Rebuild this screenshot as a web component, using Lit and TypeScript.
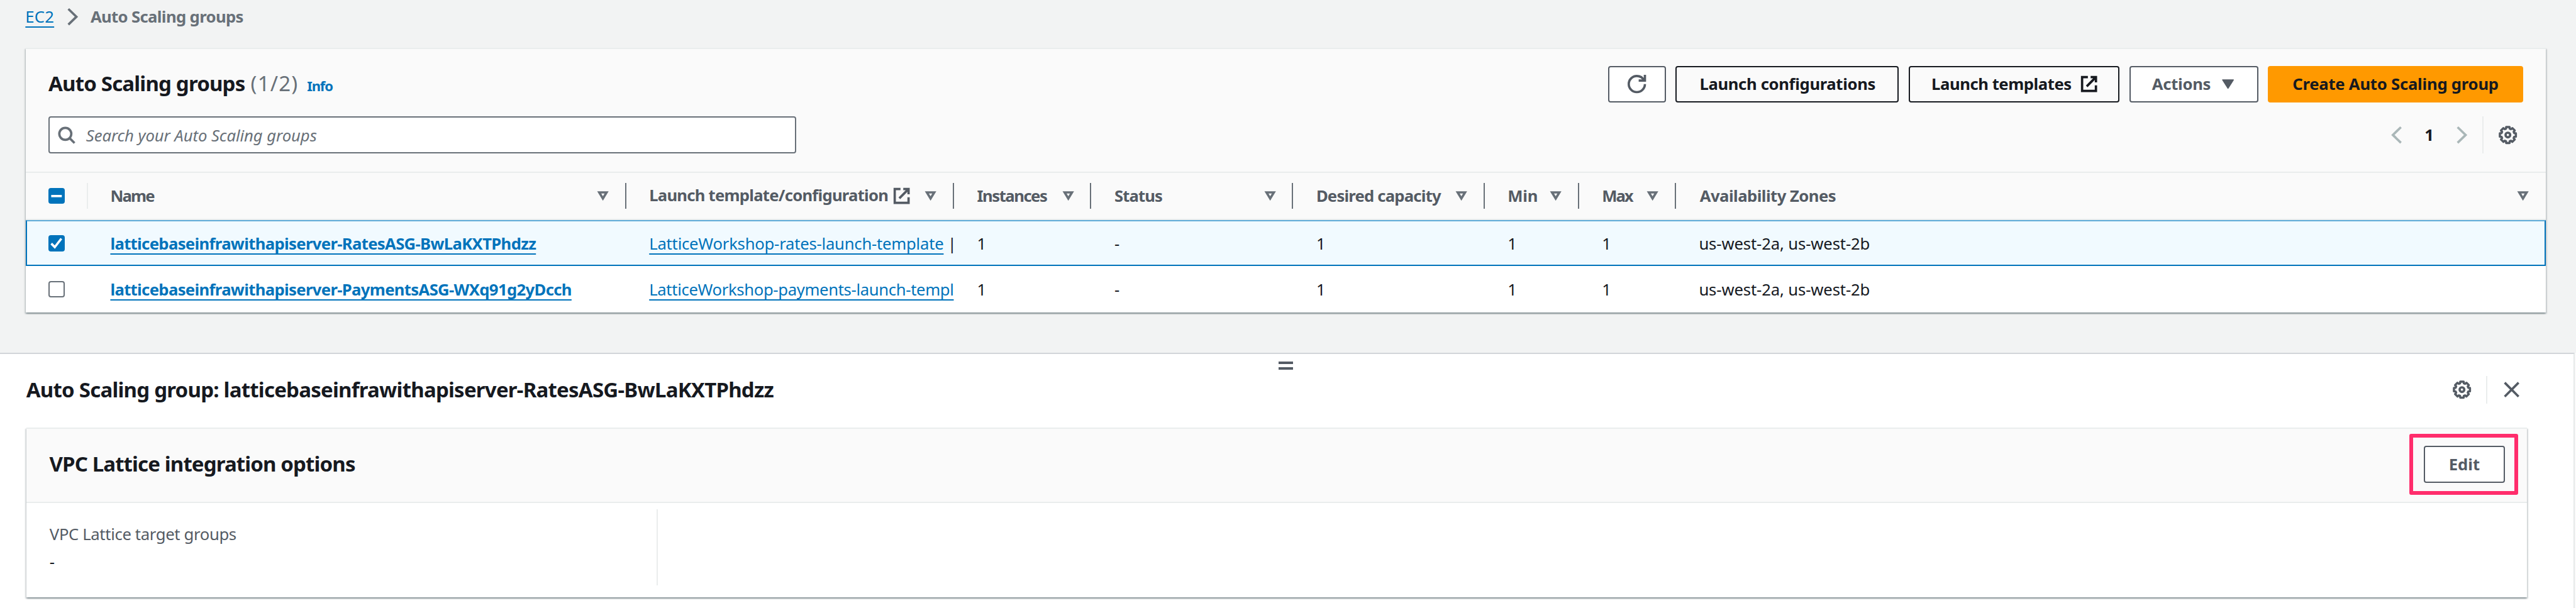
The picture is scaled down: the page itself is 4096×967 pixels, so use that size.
import { LitElement, html, css, svg, unsafeCSS } from "lit";
import { customElement, property } from "lit/decorators.js";
import { classMap } from "lit/directives/class-map.js";

// Design units (half of a CSS pixel in the console's own grid) to page pixels.
const SCALE = 0.91715;
const u = (n: number) => unsafeCSS((n * SCALE).toFixed(2) + "px");

const gearPath = (() => {
  const pts: string[] = [];
  for (let i = 0; i < 8; i++) {
    const a = i * 45;
    for (const [r, off] of [[5.7, -16.5], [7.1, -12], [7.1, 12], [5.7, 16.5]]) {
      const t = ((a + off) * Math.PI) / 180;
      pts.push(`${(8 + r * Math.sin(t)).toFixed(2)} ${(8 - r * Math.cos(t)).toFixed(2)}`);
    }
  }
  return "M" + pts.join("L") + "Z";
})();

const ICONS: Record<string, unknown> = {
  refresh: svg`<path d="M15 8c0 3.87-3.13 7-7 7s-7-3.13-7-7 3.13-7 7-7c2.79 0 5.2 1.63 6.33 4"/><path d="M9.6 5H15V0"/>`,
  external: svg`<path d="M9.4 2H14v4.6M6 10l8-8M14 9.2V14H2V2h5"/>`,
  right: svg`<path d="M4.2 1.2l7 6.8-7 6.8"/>`,
  left: svg`<path d="M11.8 1.2L4.8 8l7 6.8"/>`,
  search: svg`<circle cx="7" cy="7" r="5.2"/><path d="M15 15l-4.3-4.3"/>`,
  sort: svg`<path d="M4.8 4.9h6.4L8 10.2z"/>`,
  caret: svg`<path class="solid" d="M3.4 4.4h9.2L8 11.6z"/>`,
  gear: svg`<path class="round" d="${gearPath}"/><circle cx="8" cy="8" r="2"/>`,
  close: svg`<path d="M2 2l12 12M14 2L2 14"/>`,
};

@customElement("ui-icon")
class UiIcon extends LitElement {
  @property() name = "gear";
  static styles = css`
    :host { display: block; flex: none; width: ${u(32)}; height: ${u(32)}; }
    svg { display: block; width: 100%; height: 100%; overflow: visible;
      fill: none; stroke: currentColor; stroke-width: 2; }
    .round { stroke-linejoin: round; stroke-width: 1.9; }
    .solid { fill: currentColor; stroke-width: 1; stroke-linejoin: round; }
  `;
  render() {
    return html`<svg viewBox="0 0 16 16">${ICONS[this.name]}</svg>`;
  }
}

@customElement("ui-checkbox")
class UiCheckbox extends LitElement {
  @property() state = "off";
  static styles = css`
    .box { box-sizing: border-box; width: ${u(28)}; height: ${u(28)}; border: 2px solid #687078;
      border-radius: 4px; background: #fff; }
    .filled { border: 0; background: #0073bb; }
    svg { display: block; width: 100%; height: 100%; fill: none; stroke: #fff; stroke-width: 2; }
  `;
  render() {
    return html`<div class=${classMap({ box: true, filled: this.state !== "off" })}>
      ${this.state === "off" ? "" : html`<svg viewBox="0 0 14 14">
        <path d=${this.state === "on" ? "M2.5 7.3l3 3.1L11.2 3" : "M2.4 7h9.2"}></path></svg>`}
    </div>`;
  }
}

const COLUMNS = [
  { label: "Name", spacing: -1.8 },
  { label: "Launch template/configuration", spacing: -0.76, external: true },
  { label: "Instances", spacing: -1.5 },
  { label: "Status", spacing: -0.86 },
  { label: "Desired capacity", spacing: -0.8 },
  { label: "Min", spacing: -0.2 },
  { label: "Max", spacing: -2.1 },
  { label: "Availability Zones", spacing: -0.54 },
];

const ROWS = [
  { on: true, name: "latticebaseinfrawithapiserver-RatesASG-BwLaKXTPhdzz",
    template: "LatticeWorkshop-rates-launch-template", spacing: -0.24, tail: " |",
    rest: ["1", "-", "1", "1", "1", "us-west-2a, us-west-2b"] },
  { on: false, name: "latticebaseinfrawithapiserver-PaymentsASG-WXq91g2yDcch",
    template: "LatticeWorkshop-payments-launch-templ", spacing: -0.36, tail: "",
    rest: ["1", "-", "1", "1", "1", "us-west-2a, us-west-2b"] },
];

@customElement("app-root")
class AppRoot extends LitElement {
  static styles = css`
    :host { display: flex; flex-direction: column; width: 4096px; height: 967px; overflow: hidden;
      background: #f2f3f3; color: #16191f; font: 400 ${u(28)} "Noto Sans", "Open Sans", sans-serif;
      white-space: nowrap; }
    * { box-sizing: border-box; }
    a { color: #0073bb; text-decoration: underline; text-decoration-thickness: 2px;
      text-underline-offset: 6px; text-decoration-skip-ink: none; }
    b, h2 { font-weight: 700; margin: 0; }
    h2 { font-size: ${u(36)}; }
    .muted { color: #687078; }

    .crumbs { display: flex; align-items: center; flex: none; height: ${u(83.3)};
      padding: 0 0 ${u(26)} ${u(43)}; color: #687078; }
    .crumbs a { padding: 0 ${u(1)}; letter-spacing: 0.2px; }
    .crumbs ui-icon { margin: 0 ${u(15)} 0 ${u(15)}; }
    .crumbs b { letter-spacing: -0.64px; }

    .card { flex: none; display: flex; flex-direction: column; background: #fff;
      border-top: 2px solid #eaeded;
      box-shadow: 0 2px 2px 0 rgba(0, 28, 36, 0.3), 2px 2px 2px 0 rgba(0, 28, 36, 0.13), -2px 2px 2px 0 rgba(0, 28, 36, 0.13); }
    .groups { margin-left: ${u(44.5)}; width: ${u(4369.5)}; height: ${u(458.4)}; }
    .head { flex: none; height: ${u(214)}; background: #fafafa; border-bottom: 2px solid #eaeded;
      padding: ${u(28.5)} ${u(40)} 0 ${u(39.5)}; display: flex; flex-direction: column; gap: ${u(24)}; }
    .bar { display: flex; justify-content: space-between; align-items: center; height: ${u(64)}; }
    .title { display: flex; align-items: baseline; height: ${u(64)}; line-height: ${u(60)}; }
    .title h2 { letter-spacing: -0.82px; }
    .count { font-size: ${u(36)}; letter-spacing: 1.2px; margin-left: ${u(10)}; }
    .info { color: #0073bb; font-size: ${u(24)}; font-weight: 700; letter-spacing: -1.1px; margin-left: ${u(15)}; }
    .actions { display: flex; gap: ${u(16.7)}; }
    .btn { display: flex; align-items: center; justify-content: center; height: ${u(64)};
      border: 2px solid #545b64; border-radius: 4px; background: #fff; color: #545b64; font-weight: 700; }
    .plain { background: transparent; border-color: #16191f; color: #16191f; }
    .refresh { width: ${u(99.5)}; }
    .configs { width: ${u(387.5)}; letter-spacing: -0.35px; padding-left: 1px; }
    .templates { width: ${u(366)}; letter-spacing: -0.45px; gap: ${u(15)}; padding-left: ${u(3)}; }
    .menu { width: ${u(224)}; letter-spacing: -0.3px; gap: ${u(14)}; padding-left: ${u(2.5)}; }
    .primary { width: ${u(441.7)}; letter-spacing: -0.23px; background: #ff9900; border-color: #ff9900; color: #16191f; }
    .search { display: flex; align-items: center; width: ${u(1296)}; height: ${u(64)}; background: #fff;
      border: 2px solid #687078; border-radius: 4px; color: #687078; font-style: italic;
      padding: 1px 0 0 ${u(13.5)}; gap: ${u(17.5)}; letter-spacing: -0.07px; }
    .pager { display: flex; align-items: center; height: ${u(64)}; padding-right: ${u(10)}; }
    .pager .arrow { color: #aab7b8; }
    .page { width: ${u(80.5)}; text-align: center; color: #16191f; }
    .line { width: 2px; height: 100%; background: #eaeded; margin: 0 ${u(26)} 0 ${u(20)}; }
    .gear { color: #545b64; }

    .row { display: grid; align-items: center;
      grid-template-columns: ${u(108)} ${u(933)} ${u(568.5)} ${u(238)} ${u(350)} ${u(332)} ${u(163.5)} ${u(168)} 1fr; }
    .row > :first-child { padding-left: ${u(39.5)}; }
    .cols { flex: none; height: ${u(82.2)}; background: #fafafa; border-bottom: 2px solid #eaeded;
      color: #545b64; font-weight: 700; }
    .th { display: flex; align-items: center; justify-content: space-between; height: ${u(44)};
      border-right: 2px solid #687078; padding: 0 ${u(22)} 0 ${u(40)}; }
    .th:nth-child(2) { padding-left: ${u(38.8)}; }
    .th:last-child { border: 0; padding-right: ${u(24)}; padding-left: ${u(41.5)}; }
    .pick { border-right-color: #eaeded; padding-right: 0; }
    .label { display: flex; align-items: center; padding-top: 1px; }
    .label ui-icon { margin-left: ${u(7.5)}; }
    .raised { padding-bottom: ${u(4)}; }
    .raised ui-icon { margin-top: ${u(3)}; }
    .th > ui-icon { color: #687078; }
    .data { flex: none; height: ${u(80)}; }
    .picked { background: #f1faff; border: 2px solid #0073bb; border-top-color: #5fabd8; }
    .picked > :first-child { padding-left: calc(${u(39.5)} - 2px); }
    .picked { grid-template-columns: calc(${u(108)} - 2px) ${u(933)} ${u(568.5)} ${u(238)} ${u(350)} ${u(332)} ${u(163.5)} ${u(168)} 1fr; }
    .td { padding-left: ${u(40)}; line-height: ${u(60)}; letter-spacing: -0.14px; }
    .picked .td { padding-top: 1px; }
    .name { padding-left: ${u(38.8)}; font-weight: 700; letter-spacing: -0.66px; }

    .gap { flex: none; height: ${u(69.8)}; }
    .page-edge { flex: 1; display: flex; background: #fafafa; }
    .split { flex: none; display: flex; flex-direction: column; width: ${u(4464)};
      background: #fff; border-top: 2px solid #d2d5d9; border-right: 2px solid #e6e9e9;
      padding: 0 ${u(80.5)} 0 ${u(45.5)}; }
    .handle { align-self: center; flex: none; display: flex; flex-direction: column; gap: ${u(5.4)};
      margin: ${u(13.4)} 0 ${u(3)} ${u(31)}; }
    .handle i { display: block; width: ${u(25)}; height: 4px; background: #545b64; }
    .split-head { flex: none; display: flex; justify-content: space-between; align-items: center;
      height: ${u(64)}; }
    .split-head h2 { letter-spacing: -0.77px; padding-bottom: ${u(2)}; }
    .tools { display: flex; align-items: center; height: ${u(48)}; color: #545b64; padding-right: ${u(10.5)}; }
    .tools .line { margin: 0 ${u(26.5)} 0 ${u(25.5)}; }
    .options { margin-top: ${u(33.5)}; height: ${u(294)}; }
    .options-head { flex: none; height: ${u(128)}; background: #fafafa; border-bottom: 2px solid #eaeded;
      display: flex; align-items: center; justify-content: space-between; padding: 0 ${u(39)} ${u(3)} ${u(40)}; }
    .options-head h2 { letter-spacing: -0.87px; padding-bottom: ${u(2)}; }
    .edit-wrap { position: relative; }
    .edit { width: ${u(140)}; height: ${u(65)}; }
    .mark { position: absolute; left: ${u(-25)}; top: ${u(-20.5)}; width: ${u(188)}; height: ${u(106)};
      border: ${u(6.6)} solid #ff2d6c; border-radius: 3px; }
    .field { margin: ${u(11.5)} 0 0; width: ${u(1095)}; height: ${u(132)}; border-right: 2px solid #eaeded;
      padding: ${u(19)} 0 0 ${u(40.5)}; line-height: ${u(48)}; }
    .field .key { color: #545b64; letter-spacing: -0.36px; }
  `;

  render() {
    return html`
      <nav class="crumbs"><a>EC2</a><ui-icon name="right"></ui-icon><b>Auto Scaling groups</b></nav>
      <section class="card groups">
        <header class="head">
          <div class="bar">
            <div class="title"><h2>Auto Scaling groups</h2><span class="count muted">(1/2)</span><span class="info">Info</span></div>
            <div class="actions">
              <div class="btn refresh"><ui-icon name="refresh"></ui-icon></div>
              <div class="btn plain configs">Launch configurations</div>
              <div class="btn plain templates">Launch templates<ui-icon name="external"></ui-icon></div>
              <div class="btn menu">Actions<ui-icon name="caret"></ui-icon></div>
              <div class="btn primary">Create Auto Scaling group</div>
            </div>
          </div>
          <div class="bar">
            <div class="search"><ui-icon name="search"></ui-icon>Search your Auto Scaling groups</div>
            <div class="pager">
              <ui-icon class="arrow" name="left"></ui-icon><b class="page">1</b><ui-icon class="arrow" name="right"></ui-icon>
              <span class="line"></span><ui-icon class="gear" name="gear"></ui-icon>
            </div>
          </div>
        </header>
        <div class="row cols">
          <div class="th pick"><ui-checkbox state="mixed"></ui-checkbox></div>
          ${COLUMNS.map((c) => html`<div class="th">
            <span class=${classMap({ label: true, raised: !!c.external })} style="letter-spacing:${c.spacing}px">${c.label}${c.external ? html`<ui-icon name="external"></ui-icon>` : ""}</span>
            <ui-icon name="sort"></ui-icon></div>`)}
        </div>
        ${ROWS.map((r) => html`<div class=${classMap({ row: true, data: true, picked: r.on })}>
          <div><ui-checkbox state=${r.on ? "on" : "off"}></ui-checkbox></div>
          <div class="td name"><a>${r.name}</a></div>
          <div class="td" style="letter-spacing:${r.spacing}px"><a>${r.template}</a>${r.tail}</div>
          ${r.rest.map((v) => html`<div class="td">${v}</div>`)}
        </div>`)}
      </section>
      <div class="gap"></div>
      <div class="page-edge">
        <section class="split">
          <div class="handle"><i></i><i></i></div>
          <div class="split-head">
            <h2>Auto Scaling group: latticebaseinfrawithapiserver-RatesASG-BwLaKXTPhdzz</h2>
            <div class="tools"><ui-icon name="gear"></ui-icon><span class="line"></span><ui-icon name="close"></ui-icon></div>
          </div>
          <div class="card options">
            <div class="options-head">
              <h2>VPC Lattice integration options</h2>
              <div class="edit-wrap"><div class="btn edit">Edit</div><div class="mark"></div></div>
            </div>
            <div class="field"><div class="key">VPC Lattice target groups</div><div>-</div></div>
          </div>
        </section>
      </div>
    `;
  }
}
